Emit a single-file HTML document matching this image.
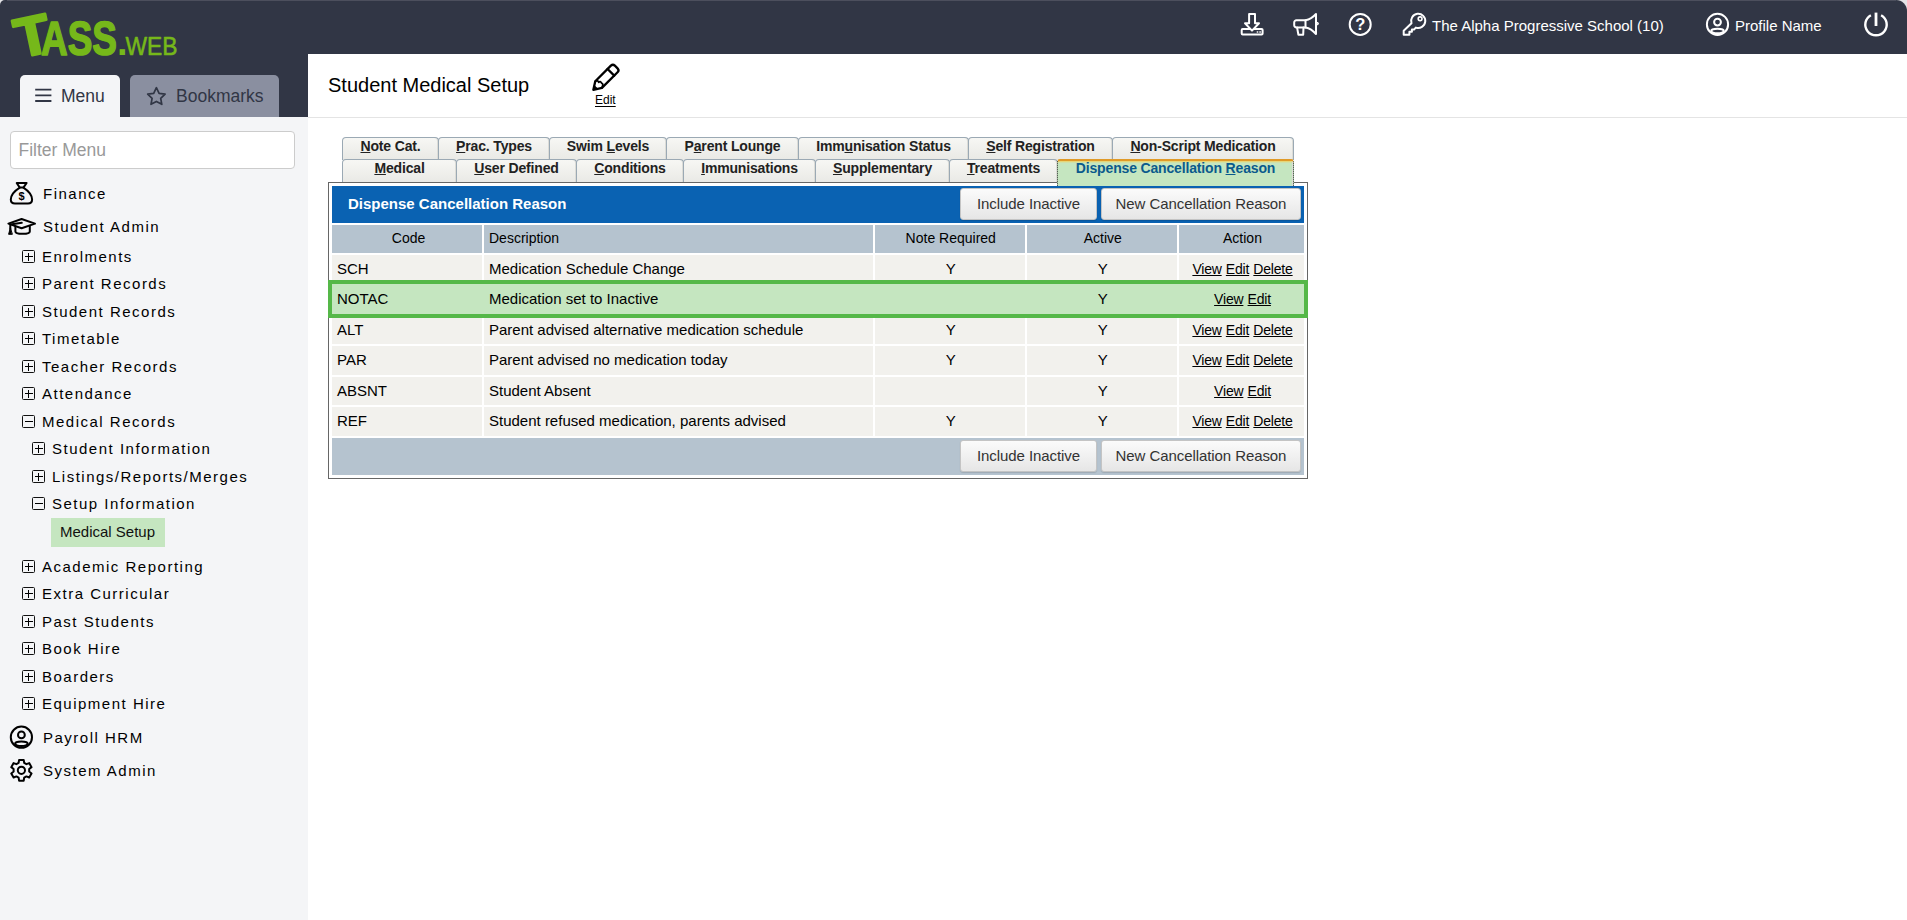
<!DOCTYPE html>
<html lang="en">
<head>
<meta charset="utf-8">
<title>Student Medical Setup</title>
<style>
*{box-sizing:border-box;margin:0;padding:0}
html,body{width:1907px;height:920px;overflow:hidden;background:#fff;font-family:"Liberation Sans",Arial,sans-serif;color:#000}
.abs{position:absolute}
#top{position:absolute;left:0;top:0;width:1907px;height:54px;background:#313645;border-radius:5px 11px 0 0}
#topline{position:absolute;left:7px;top:0;width:1889px;height:1px;background:#4c4f5d}
.corner{position:absolute;top:0;width:12px;height:12px;background:#e4e4e7}
#lefttop{position:absolute;left:0;top:54px;width:308px;height:63px;background:#313645}
#side{position:absolute;left:0;top:117px;width:308px;height:803px;background:#f4f5f7}
#titlebar{position:absolute;left:308px;top:54px;width:1599px;height:64px;background:#fff;border-bottom:1px solid #e4e4e4}
#logo{position:absolute;left:11px;top:3px;color:#76b81a;font-weight:bold;white-space:nowrap;line-height:1}
.tab{position:absolute;top:75px;height:42px;border-radius:5px 5px 0 0;font-size:17.5px;color:#313645;line-height:42px}
.ti{position:absolute;font-size:15px;color:#fff;white-space:nowrap;top:17px;line-height:17px}
#filter{position:absolute;left:10px;top:131px;width:285px;height:38px;border:1px solid #ccc;border-radius:4px;background:#fff;font-size:17.5px;color:#999;line-height:37px;padding-left:7.5px}
.m1{position:absolute;margin-top:1px;left:43px;font-size:15px;letter-spacing:1.5px;line-height:20px;white-space:nowrap;color:#000}
.m2{position:absolute;margin-top:.6px;left:42px;font-size:15px;letter-spacing:1.5px;line-height:20px;white-space:nowrap;color:#000}
.m3{position:absolute;margin-top:.6px;left:52px;font-size:15px;letter-spacing:1.5px;line-height:20px;white-space:nowrap;color:#000}
.pm{position:absolute;width:13px;height:13px;border:1px solid #111;border-radius:1.5px}
.pm:before{content:"";position:absolute;left:1.5px;top:5px;width:8px;height:1px;background:#000}
.pm.plus:after{content:"";position:absolute;left:5px;top:1.5px;width:1px;height:8px;background:#000}
.ico{position:absolute}
.tb{position:absolute;letter-spacing:-.16px;height:23px;border:1px solid #9ba9b4;border-bottom:none;box-shadow:inset -1px 0 0 #dcdcd7;border-radius:4px 4px 0 0;background:linear-gradient(#f7f7f4,#e9e9e5);font-size:14px;font-weight:bold;text-align:center;line-height:18px;color:#222;white-space:nowrap}
.tb u{text-decoration:underline}
.r1{top:137px;height:23px;line-height:16px}
.r2{top:159px;height:24px;line-height:17px}
#box{position:absolute;left:328px;top:182px;width:980px;height:297px;border:1px solid #666;background:#fff}
.cell{position:absolute;font-size:15px;line-height:26.6px;height:28.5px;background:#f2f1ed;white-space:nowrap;overflow:hidden}
.hd{background:#b5c3cf;height:28px;line-height:26px;text-align:center;font-size:14px}
.c1{left:332px;width:150px;padding-left:5px}
.c2{left:484px;width:389px;padding-left:5px}
.c3{left:875px;width:150px;text-align:center;padding-left:1.5px}
.c4{left:1027px;width:150px;text-align:center;padding-left:1.5px}
.c5{left:1179px;width:125px;text-align:center;padding-left:2px}
.cell a{color:#000;text-decoration:underline;font-size:14px;letter-spacing:-.2px}
.btn{position:absolute;height:32px;box-shadow:0 1px 1px rgba(0,0,0,.13);border:1px solid #c4c4c4;border-radius:3px;background:linear-gradient(#fbfbfb,#e6e6e6);font-size:15px;color:#333;text-align:center;line-height:30px;white-space:nowrap;letter-spacing:-.08px}
</style>
</head>
<body>
<div class="corner" style="left:0"></div><div class="corner" style="left:1895px"></div>
<div id="top"></div><div id="topline"></div>
<div id="lefttop"></div>
<div id="side"></div>
<div id="titlebar"></div>

<!-- logo -->

<!-- top right -->
<div class="ti" style="left:1432px">The Alpha Progressive School (10)</div>
<div class="ti" style="left:1735px">Profile Name</div>

<!-- menu tabs -->
<div class="tab" style="left:20px;width:100px;background:#f4f5f7"><span style="position:absolute;left:41px">Menu</span></div>
<div class="tab" style="left:130px;width:149px;background:#8a8fa0"><span style="position:absolute;left:46px">Bookmarks</span></div>

<div id="filter">Filter Menu</div>

<!-- sidebar items -->
<div class="m1" style="top:183px">Finance</div>
<div class="m1" style="top:216px">Student Admin</div>
<div class="m2" style="top:246px">Enrolments</div>
<div class="m2" style="top:273.5px">Parent Records</div>
<div class="m2" style="top:301px">Student Records</div>
<div class="m2" style="top:328.5px">Timetable</div>
<div class="m2" style="top:356px">Teacher Records</div>
<div class="m2" style="top:383.5px">Attendance</div>
<div class="m2" style="top:411px">Medical Records</div>
<div class="m3" style="top:438.5px">Student Information</div>
<div class="m3" style="top:466px">Listings/Reports/Merges</div>
<div class="m3" style="top:493.5px">Setup Information</div>
<div class="abs" style="left:51px;top:518px;width:114px;height:29px;background:#c5e6c0"></div>
<div class="abs" style="left:60px;top:522px;font-size:15px;line-height:20px;white-space:nowrap;color:#111">Medical Setup</div>
<div class="m2" style="top:556px">Academic Reporting</div>
<div class="m2" style="top:583.5px">Extra Curricular</div>
<div class="m2" style="top:611px">Past Students</div>
<div class="m2" style="top:638.5px">Book Hire</div>
<div class="m2" style="top:666px">Boarders</div>
<div class="m2" style="top:693.5px">Equipment Hire</div>
<div class="m1" style="top:727px">Payroll HRM</div>
<div class="m1" style="top:760px">System Admin</div>


<!-- tree boxes -->
<div class="pm plus" style="left:22px;top:250px"></div>
<div class="pm plus" style="left:22px;top:277px"></div>
<div class="pm plus" style="left:22px;top:305px"></div>
<div class="pm plus" style="left:22px;top:332px"></div>
<div class="pm plus" style="left:22px;top:360px"></div>
<div class="pm plus" style="left:22px;top:387px"></div>
<div class="pm minus" style="left:22px;top:415px"></div>
<div class="pm plus" style="left:22px;top:560px"></div>
<div class="pm plus" style="left:22px;top:587px"></div>
<div class="pm plus" style="left:22px;top:615px"></div>
<div class="pm plus" style="left:22px;top:642px"></div>
<div class="pm plus" style="left:22px;top:670px"></div>
<div class="pm plus" style="left:22px;top:697px"></div>
<div class="pm plus" style="left:32px;top:442px"></div>
<div class="pm plus" style="left:32px;top:470px"></div>
<div class="pm minus" style="left:32px;top:497px"></div>

<!-- title -->
<div class="abs" style="left:328px;top:73px;font-size:20px;line-height:24px;white-space:nowrap">Student Medical Setup</div>
<div class="abs" style="left:595px;top:93px;font-size:12px;text-underline-offset:2px;line-height:14px;text-decoration:underline">Edit</div>

<!-- tabs row 1 -->
<div class="tb r1" style="left:342px;width:97px"><u>N</u>ote Cat.</div>
<div class="tb r1" style="left:438px;width:112px"><u>P</u>rac. Types</div>
<div class="tb r1" style="left:549px;width:118px">Swim <u>L</u>evels</div>
<div class="tb r1" style="left:666px;width:133px">P<u>a</u>rent Lounge</div>
<div class="tb r1" style="left:798px;width:171px">Imm<u>u</u>nisation Status</div>
<div class="tb r1" style="left:968px;width:145px"><u>S</u>elf Registration</div>
<div class="tb r1" style="left:1112px;width:182px"><u>N</u>on-Script Medication</div>
<!-- tabs row 2 -->
<div class="tb r2" style="left:342px;width:115px"><u>M</u>edical</div>
<div class="tb r2" style="left:456px;width:121px"><u>U</u>ser Defined</div>
<div class="tb r2" style="left:576px;width:108px"><u>C</u>onditions</div>
<div class="tb r2" style="left:683px;width:133px"><u>I</u>mmunisations</div>
<div class="tb r2" style="left:815px;width:135px"><u>S</u>upplementary</div>
<div class="tb r2" style="left:949px;width:109px"><u>T</u>reatments</div>

<div id="box"></div>
<div class="tb" style="left:1057px;top:159px;width:237px;height:29px;background:linear-gradient(#f0d060,#c5e6c0 2px);border:1px dotted #333;border-top:2px solid #e09a28;color:#0b5a8c;line-height:15px;border-radius:3px 3px 0 0">Dispense Cancellation <u>R</u>eason</div>

<!-- blue header -->
<div class="abs" style="left:332px;top:186px;width:972px;height:37px;background:#0a62b2"></div>
<div class="abs" style="left:348px;top:194px;font-size:15px;font-weight:bold;color:#fff;line-height:20px;white-space:nowrap">Dispense Cancellation Reason</div>
<div class="btn" style="left:960px;top:188px;width:137px">Include Inactive</div>
<div class="btn" style="left:1101px;top:188px;width:200px">New Cancellation Reason</div>

<!-- column headers -->
<div class="cell hd c1" style="top:225px;padding-left:3px">Code</div>
<div class="cell hd c2" style="top:225px;text-align:left">Description</div>
<div class="cell hd c3" style="top:225px">Note Required</div>
<div class="cell hd c4" style="top:225px">Active</div>
<div class="cell hd c5" style="top:225px">Action</div>

<!-- rows -->
<div class="cell c1" style="top:255px;height:28px;line-height:28.5px">SCH</div><div class="cell c2" style="top:255px;height:28px;line-height:28.5px">Medication Schedule Change</div><div class="cell c3" style="top:255px;height:28px;line-height:28.5px">Y</div><div class="cell c4" style="top:255px;height:28px;line-height:28.5px">Y</div><div class="cell c5" style="top:255px;height:28px;line-height:28.5px"><a>View</a> <a>Edit</a> <a>Delete</a></div>

<div class="cell c1" style="top:316px;height:28px;line-height:28.5px">ALT</div><div class="cell c2" style="top:316px;height:28px;line-height:28.5px">Parent advised alternative medication schedule</div><div class="cell c3" style="top:316px;height:28px;line-height:28.5px">Y</div><div class="cell c4" style="top:316px;height:28px;line-height:28.5px">Y</div><div class="cell c5" style="top:316px;height:28px;line-height:28.5px"><a>View</a> <a>Edit</a> <a>Delete</a></div>

<div class="cell c1" style="top:346px;height:29px;line-height:27.6px">PAR</div><div class="cell c2" style="top:346px;height:29px;line-height:27.6px">Parent advised no medication today</div><div class="cell c3" style="top:346px;height:29px;line-height:27.6px">Y</div><div class="cell c4" style="top:346px;height:29px;line-height:27.6px">Y</div><div class="cell c5" style="top:346px;height:29px;line-height:27.6px"><a>View</a> <a>Edit</a> <a>Delete</a></div>

<div class="cell c1" style="top:377px;height:28px;line-height:28.5px">ABSNT</div><div class="cell c2" style="top:377px;height:28px;line-height:28.5px">Student Absent</div><div class="cell c3" style="top:377px;height:28px;line-height:28.5px"></div><div class="cell c4" style="top:377px;height:28px;line-height:28.5px">Y</div><div class="cell c5" style="top:377px;height:28px;line-height:28.5px"><a>View</a> <a>Edit</a></div>

<div class="cell c1" style="top:407px;height:29px;line-height:27.6px">REF</div><div class="cell c2" style="top:407px;height:29px;line-height:27.6px">Student refused medication, parents advised</div><div class="cell c3" style="top:407px;height:29px;line-height:27.6px">Y</div><div class="cell c4" style="top:407px;height:29px;line-height:27.6px">Y</div><div class="cell c5" style="top:407px;height:29px;line-height:27.6px"><a>View</a> <a>Edit</a> <a>Delete</a></div>

<!-- highlighted row -->
<div class="abs" style="left:328px;top:280px;width:980px;height:38px;background:#c5e6c0;border:4px solid #55b848"></div>
<div class="cell c1" style="top:285px;background:none;line-height:28.5px">NOTAC</div><div class="cell c2" style="top:285px;background:none;line-height:28.5px">Medication set to Inactive</div><div class="cell c4" style="top:285px;background:none;line-height:28.5px">Y</div><div class="cell c5" style="top:285px;background:none;line-height:28.5px"><a>View</a> <a>Edit</a></div>

<!-- footer -->
<div class="abs" style="left:332px;top:437.5px;width:972px;height:37px;background:#b5c3cf"></div>
<div class="btn" style="left:960px;top:440px;width:137px">Include Inactive</div>
<div class="btn" style="left:1101px;top:440px;width:200px">New Cancellation Reason</div>


<!-- icon overlay -->
<svg class="abs" style="left:0;top:0;pointer-events:none" width="1907" height="920" viewBox="0 0 1907 920" fill="none" stroke-linecap="round" stroke-linejoin="round">
 <g stroke="#fff" stroke-width="2">
  <!-- download -->
  <rect x="1241.7" y="29" width="20.9" height="5.5" rx="1"/>
  <path d="M1249.1,14 H1255 V23.2 H1259 L1252,30.6 L1245,23.2 H1249.1 Z" fill="#313645"/>
  <path d="M1257.2,32 h.6 M1259.8,32 h.6" stroke-width="1.3"/>
  <!-- megaphone -->
  <path d="M1305.5,20.2 H1296.4 a2.2,2.2 0 0 0 -2.2,2.2 V25.2 a2.2,2.2 0 0 0 2.2,2.2 H1305.5 Z"/>
  <path d="M1305.5,20.2 C1310,19.4 1313.5,16.8 1316,14 V34 C1313.5,31 1310,28.2 1305.5,27.4"/>
  <path d="M1297.1,27.6 L1298.4,34.8 H1303.2 L1303.5,27.6"/>
  <path d="M1317.2,22.3 a1.3,1.3 0 0 1 0,2.6 Z" fill="#fff" stroke-width="1"/>
  <!-- help -->
  <circle cx="1360.2" cy="24.4" r="10.5"/>
  <!-- key -->
  <path d="M1411.5,23.3 A7.1,7.1 0 1 1 1415.8,27.6 L1414,29.6 H1411.9 V31.8 H1409.4 V34.7 H1403.7 V30.7 Z"/>
  <circle cx="1420.1" cy="18.8" r="1.9" stroke-width="1.6"/>
  <!-- user -->
  <circle cx="1717.5" cy="24.4" r="10.6"/>
  <circle cx="1717.5" cy="22.1" r="3.4"/>
  <ellipse cx="1717.5" cy="31" rx="6.3" ry="2.3"/>
  <!-- power -->
  <path d="M1881.1,15.2 A10.7,10.7 0 1 1 1870.9,15.2" stroke-width="2.4" stroke-linecap="butt"/>
  <path d="M1876,12.6 V26" stroke-width="2.8" stroke-linecap="butt"/>
 </g>
 <text x="1360.2" y="30" font-family="Liberation Sans, sans-serif" font-size="16.5" font-weight="bold" fill="#fff" text-anchor="middle">?</text>


 <!-- logo -->
 <g font-family="Liberation Sans, sans-serif" fill="#76b81a" stroke="#76b81a" stroke-linejoin="round">
  <text x="15" y="55" font-size="55" font-weight="bold" textLength="35" lengthAdjust="spacingAndGlyphs" transform="rotate(-12 31 36)" stroke-width="2.6">T</text>
  <text x="41" y="54.5" font-size="48" font-weight="bold" textLength="76" lengthAdjust="spacingAndGlyphs" stroke-width="1.6">ASS</text>
  <text x="117" y="54.5" font-size="38" font-weight="bold" stroke-width="0">.</text>
  <text x="125.5" y="54.5" font-size="26" textLength="52" lengthAdjust="spacingAndGlyphs" stroke-width=".6">WEB</text>
 </g>
 <!-- menu tab icons -->
 <g stroke="#313645" stroke-width="1.8" stroke-linecap="butt">
  <path d="M35.2,89.6 H51.4 M35.2,95.3 H51.4 M35.2,101 H51.4"/>
  <path d="M156.4,87.7 L159.1,93.3 L165.1,94.1 L160.7,98.3 L161.8,104.3 L156.4,101.4 L151,104.3 L152.1,98.3 L147.7,94.1 L153.7,93.3 Z" stroke-width="1.7" stroke-linejoin="round"/>
 </g>

 <!-- sidebar icons -->
 <g stroke="#000" stroke-width="2">
  <!-- money bag -->
  <path d="M16.7,183 H26.6 L23.4,187.6 H19.8 Z"/>
  <path d="M19.8,187.6 C15,190.6 10.8,195.2 10.8,199.6 C10.8,202.4 12.4,203.6 15,203.6 H28 C30.6,203.6 32.1,202.4 32.1,199.6 C32.1,195.2 28,190.6 23.4,187.6"/>
  <!-- grad cap -->
  <path d="M8.4,223.6 L21.6,219 L35,223.6 L21.6,228.3 Z"/>
  <path d="M15.4,226.6 V231.4 C15.4,234.6 29.8,234.6 29.8,231.4 V226.6"/>
  <path d="M21.8,222.8 L10.3,224.6 V229"/>
  <path d="M10.3,228 L8.6,234.3 H12 Z" fill="#000" stroke-width="1"/>
  <!-- payroll user -->
  <circle cx="21.4" cy="737.2" r="10.6"/>
  <circle cx="21.4" cy="734.9" r="3.4"/>
  <ellipse cx="21.4" cy="743.8" rx="6.3" ry="2.3"/>
  <!-- cog -->
  <path d="M24.18,762.91 L23.71,759.96 L19.09,759.96 L18.62,762.91 L16.39,764.19 L13.60,763.12 L11.28,767.13 L13.61,769.01 L13.61,771.59 L11.28,773.47 L13.60,777.48 L16.39,776.41 L18.62,777.69 L19.09,780.64 L23.71,780.64 L24.18,777.69 L26.41,776.41 L29.20,777.48 L31.52,773.47 L29.19,771.59 L29.19,769.01 L31.52,767.13 L29.20,763.12 L26.41,764.19 Z"/>
  <circle cx="21.4" cy="770.3" r="3.6"/>
 </g>
 <text x="21.5" y="200.3" font-family="Liberation Sans, sans-serif" font-size="11" font-weight="bold" fill="#000" text-anchor="middle">$</text>

 <!-- edit pencil: local coords, tip at origin, axis +x, rotated -45deg -->
 <g transform="translate(592.8,90.4) rotate(-45)" stroke="#000" stroke-width="2.3">
  <path d="M0.8,0 L8.2,-4.7 H30.3 a2.8,2.8 0 0 1 2.8,2.8 V1.9 a2.8,2.8 0 0 1 -2.8,2.8 H8.2 Z"/>
  <path d="M25.6,-4.7 V4.7"/>
  <path d="M8.2,-4.7 q2.8,1.2 1.7,3.1 q2.4,0 1.5,2.6 q1.4,1.8 -3.2,3.7" stroke-width="1.8"/>
  <path d="M0.8,0 L4.4,-2.2 V2.2 Z" fill="#000" stroke-width="1"/>
 </g>
</svg>
</body>
</html>
